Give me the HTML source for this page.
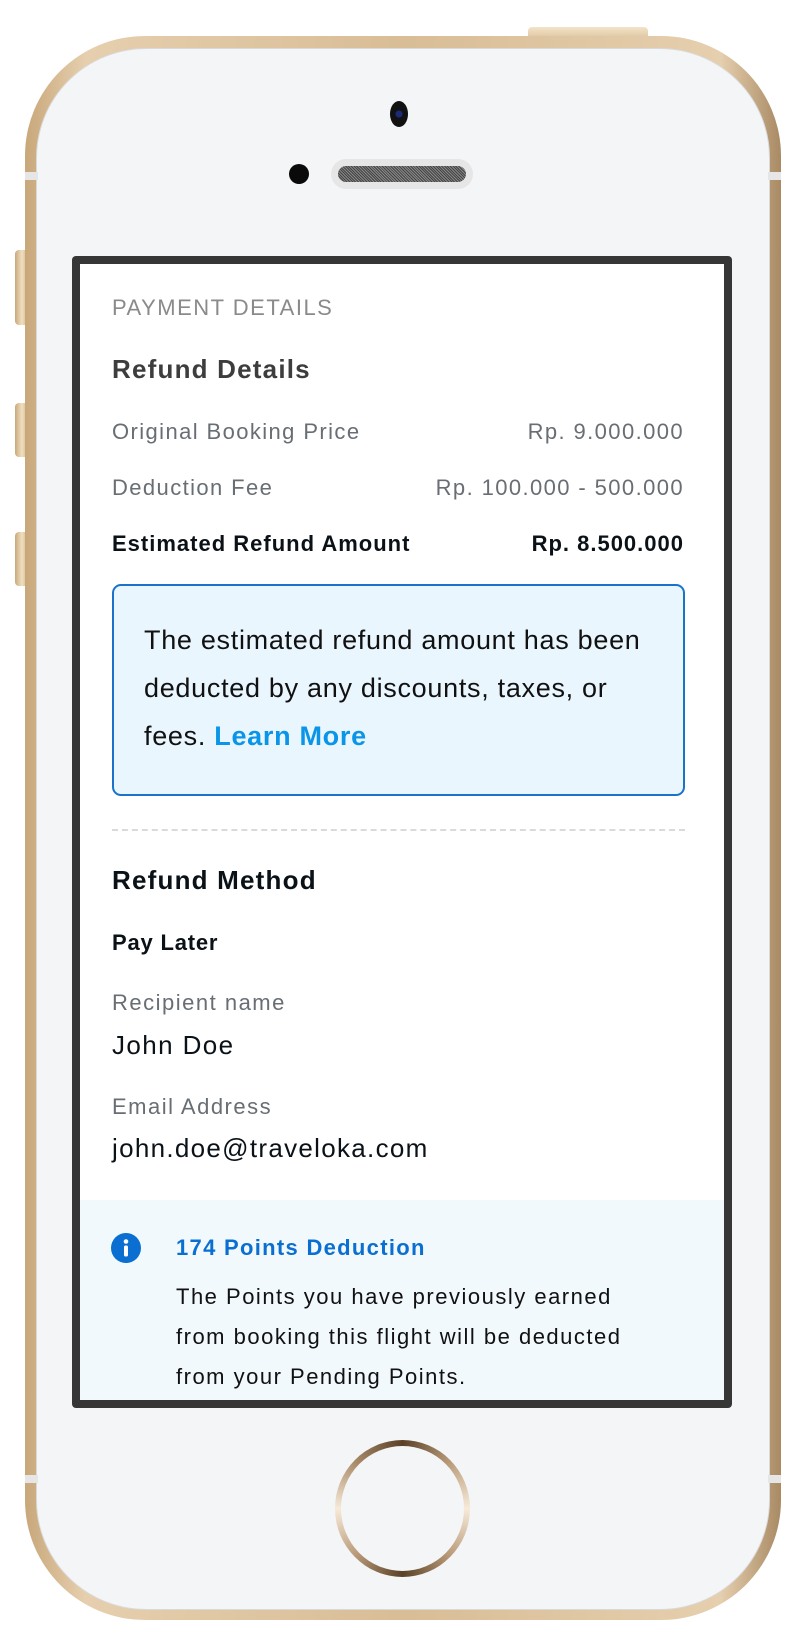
<!DOCTYPE html>
<html><head><meta charset="utf-8"><style>
*{margin:0;padding:0;box-sizing:border-box}
body{width:798px;height:1638px;background:#fff;position:relative;overflow:hidden;font-family:"Liberation Sans",sans-serif}
.a{position:absolute}
.t{position:absolute;white-space:nowrap;line-height:30px;height:30px}
</style></head><body>
<div class="a" style="left:528px;top:27px;width:120px;height:14px;border-radius:4px;background:linear-gradient(#f3e3c8,#d9bf98)"></div>
<div class="a" style="left:15px;top:250px;width:14px;height:75px;border-radius:4px;background:linear-gradient(90deg,#c9a97c,#f1dfc0,#c9a97c)"></div>
<div class="a" style="left:15px;top:403px;width:14px;height:54px;border-radius:4px;background:linear-gradient(90deg,#c9a97c,#f1dfc0,#c9a97c)"></div>
<div class="a" style="left:15px;top:532px;width:14px;height:54px;border-radius:4px;background:linear-gradient(90deg,#c9a97c,#f1dfc0,#c9a97c)"></div>
<div class="a" style="left:25px;top:36px;width:756px;height:1584px;border-radius:120px;background:linear-gradient(90deg,#c8a77a,#e6cfae 8%,#d8bd96 50%,#e6cfae 92%,#a88a64)"></div>
<div class="a" style="left:36px;top:48px;width:734px;height:1562px;border-radius:110px;background:#f4f5f7;border:1px solid #d9d9d9"></div>
<div class="a" style="left:25px;top:172px;width:13px;height:8px;background:#e6e6e6"></div>
<div class="a" style="left:768px;top:172px;width:13px;height:8px;background:#e6e6e6"></div>
<div class="a" style="left:25px;top:1475px;width:13px;height:8px;background:#e6e6e6"></div>
<div class="a" style="left:768px;top:1475px;width:13px;height:8px;background:#e6e6e6"></div>
<div class="a" style="left:390px;top:101px;width:18px;height:26px;border-radius:50%;background:radial-gradient(circle,#1c2a7a 0 3px,#111 4px)"></div>
<div class="a" style="left:289px;top:164px;width:20px;height:20px;border-radius:50%;background:#0a0a0a"></div>
<div class="a" style="left:331px;top:159px;width:142px;height:30px;border-radius:15px;background:#e6e6e6"></div>
<div class="a" style="left:338px;top:166px;width:128px;height:16px;border-radius:8px;background:repeating-linear-gradient(45deg,#444 0 1px,#888 1px 2px)"></div>
<div class="a" style="left:72px;top:256px;width:660px;height:1152px;border-radius:4px;background:#363636"></div>
<div class="a" style="left:80px;top:264px;width:644px;height:1136px;background:#fff;overflow:hidden">
  <div class="a" style="left:0;top:936px;width:644px;height:200px;background:#f1f9fd"></div>
</div>
<div class="t" style="left:112px;top:293px;font-size:22px;color:#8a8a8a;letter-spacing:1.5px">PAYMENT DETAILS</div>
<div class="t" style="left:112px;top:354px;font-size:26px;font-weight:bold;color:#3d3d3d;letter-spacing:1.2px">Refund Details</div>
<div class="t" style="left:112px;top:417px;font-size:22px;color:#686e73;letter-spacing:1.4px">Original Booking Price</div>
<div class="t" style="right:114px;top:417px;font-size:22px;color:#686e73;letter-spacing:1.4px">Rp. 9.000.000</div>
<div class="t" style="left:112px;top:473px;font-size:22px;color:#686e73;letter-spacing:1.4px">Deduction Fee</div>
<div class="t" style="right:114px;top:473px;font-size:22px;color:#686e73;letter-spacing:1.4px">Rp. 100.000 - 500.000</div>
<div class="t" style="left:112px;top:529px;font-size:22px;font-weight:bold;color:#0b1217;letter-spacing:1px">Estimated Refund Amount</div>
<div class="t" style="right:114px;top:529px;font-size:22px;font-weight:bold;color:#0b1217;letter-spacing:1px">Rp. 8.500.000</div>
<div class="a" style="left:112px;top:584px;width:573px;height:212px;border:2px solid #1a73c9;border-radius:9px;background:#eaf6fe"></div>
<div class="a" style="left:144px;top:616px;width:530px;font-size:27px;line-height:48px;color:#111;letter-spacing:0.7px">The estimated refund amount has been<br>deducted by any discounts, taxes, or<br>fees. <b style="color:#0a95e8">Learn More</b></div>
<div class="a" style="left:112px;top:829px;width:573px;border-top:2px dashed #dadada"></div>
<div class="t" style="left:112px;top:865px;font-size:26px;font-weight:bold;color:#0b1217;letter-spacing:1.2px">Refund Method</div>
<div class="t" style="left:112px;top:928px;font-size:22px;font-weight:bold;color:#0b1217;letter-spacing:0.8px">Pay Later</div>
<div class="t" style="left:112px;top:988px;font-size:22px;color:#686e73;letter-spacing:1.5px">Recipient name</div>
<div class="t" style="left:112px;top:1030px;font-size:26px;color:#0b1217;letter-spacing:1.4px">John Doe</div>
<div class="t" style="left:112px;top:1092px;font-size:22px;color:#686e73;letter-spacing:1.5px">Email Address</div>
<div class="t" style="left:112px;top:1133px;font-size:26px;color:#0b1217;letter-spacing:1.3px">john.doe@traveloka.com</div>
<svg class="a" style="left:110px;top:1232px" width="32" height="32" viewBox="0 0 32 32"><circle cx="16" cy="16" r="15" fill="#0a6fd0"/><circle cx="16" cy="9.5" r="2.3" fill="#fff"/><rect x="14" y="13.5" width="4" height="11" rx="1.5" fill="#fff"/></svg>
<div class="t" style="left:176px;top:1233px;font-size:22px;font-weight:bold;color:#0a6fd0;letter-spacing:1.3px">174 Points Deduction</div>
<div class="a" style="left:176px;top:1277px;font-size:22px;line-height:40px;color:#111;white-space:nowrap;letter-spacing:1.5px">The Points you have previously earned<br>from booking this flight will be deducted<br>from your Pending Points.</div>
<div class="a" style="left:335px;top:1440px;width:135px;height:137px;border-radius:50%;background:conic-gradient(from 0deg,#5a4128,#b89a78,#f7ead9,#b89a78,#5a4128,#b89a78,#f7ead9,#a88a68,#5a4128)"></div>
<div class="a" style="left:341px;top:1446px;width:123px;height:125px;border-radius:50%;background:#f4f5f7"></div>
</body></html>
